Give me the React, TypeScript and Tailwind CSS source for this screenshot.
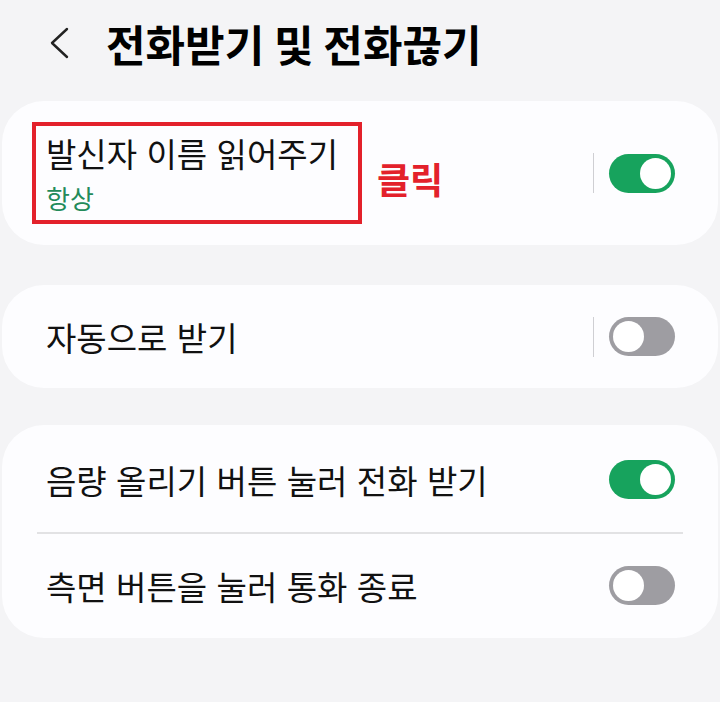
import React from "react";

function Toggle({ on }: { on: boolean }) {
  return on ? (
    <div className="w-[66px] h-[39px] rounded-full bg-[#17a35d] flex items-center justify-end pr-[4px]">
      <div className="w-[31px] h-[31px] rounded-full bg-white" />
    </div>
  ) : (
    <div className="w-[66px] h-[39px] rounded-full bg-[#9e9da2] flex items-center justify-start pl-[4px]">
      <div className="w-[31px] h-[31px] rounded-full bg-white" />
    </div>
  );
}

function VDivider() {
  return <div className="w-[1.5px] h-[40px] bg-[#cfcfd3] mr-[15px]" />;
}

export default function App() {
  return (
    <div className="w-[720px] h-[702px] bg-[#f4f4f6] text-[#111111] font-['Noto_Sans_CJK_KR','Noto_Sans',sans-serif] overflow-hidden">
      <div className="h-[86px] flex items-center pl-[49px]">
        <svg width="20" height="32" viewBox="0 0 20 32" className="shrink-0">
          <polyline points="18,2 3,16 18,30" fill="none" stroke="#222" strokeWidth="2.4" strokeLinecap="round" strokeLinejoin="round" />
        </svg>
        <h1 className="ml-[37px] text-[43px] leading-[50px] font-bold text-black">전화받기 및 전화끊기</h1>
      </div>

      <div className="pt-[15px] px-[2px] flex flex-col">
        <div className="h-[144px] rounded-[42px] bg-[#fdfdff] flex items-center pl-[30px] pr-[43px]">
          <div className="w-[330px] h-[102px] border-4 border-[#e3212b] pl-[10px] flex flex-col justify-center">
            <div className="text-[33px] leading-[38px] [word-spacing:2px]">발신자 이름 읽어주기</div>
            <div className="mt-[11px] text-[26px] leading-[30px] text-[#238b5a]">항상</div>
          </div>
          <div className="ml-[15px] mt-[10px] text-[36px] leading-[40px] font-bold text-[#e3212b]">클릭</div>
          <div className="flex-1" />
          <VDivider />
          <Toggle on />
        </div>

        <div className="mt-[40px] h-[103px] rounded-[42px] bg-[#fdfdff] flex items-center pl-[44px] pr-[43px]">
          <div className="text-[33px] leading-[38px] [word-spacing:2px]">자동으로 받기</div>
          <div className="flex-1" />
          <VDivider />
          <Toggle on={false} />
        </div>

        <div className="mt-[37px] rounded-[42px] bg-[#fdfdff] flex flex-col">
          <div className="h-[107px] flex items-center pl-[44px] pr-[43px] pt-[2px]">
            <div className="text-[33px] leading-[38px] [word-spacing:2px]">음량 올리기 버튼 눌러 전화 받기</div>
            <div className="flex-1" />
            <Toggle on />
          </div>
          <div className="mx-[35px] h-[1.5px] bg-[#e2e2e4]" />
          <div className="h-[104px] flex items-center pl-[44px] pr-[43px]">
            <div className="text-[33px] leading-[38px] [word-spacing:2px]">측면 버튼을 눌러 통화 종료</div>
            <div className="flex-1" />
            <Toggle on={false} />
          </div>
        </div>
      </div>
    </div>
  );
}
